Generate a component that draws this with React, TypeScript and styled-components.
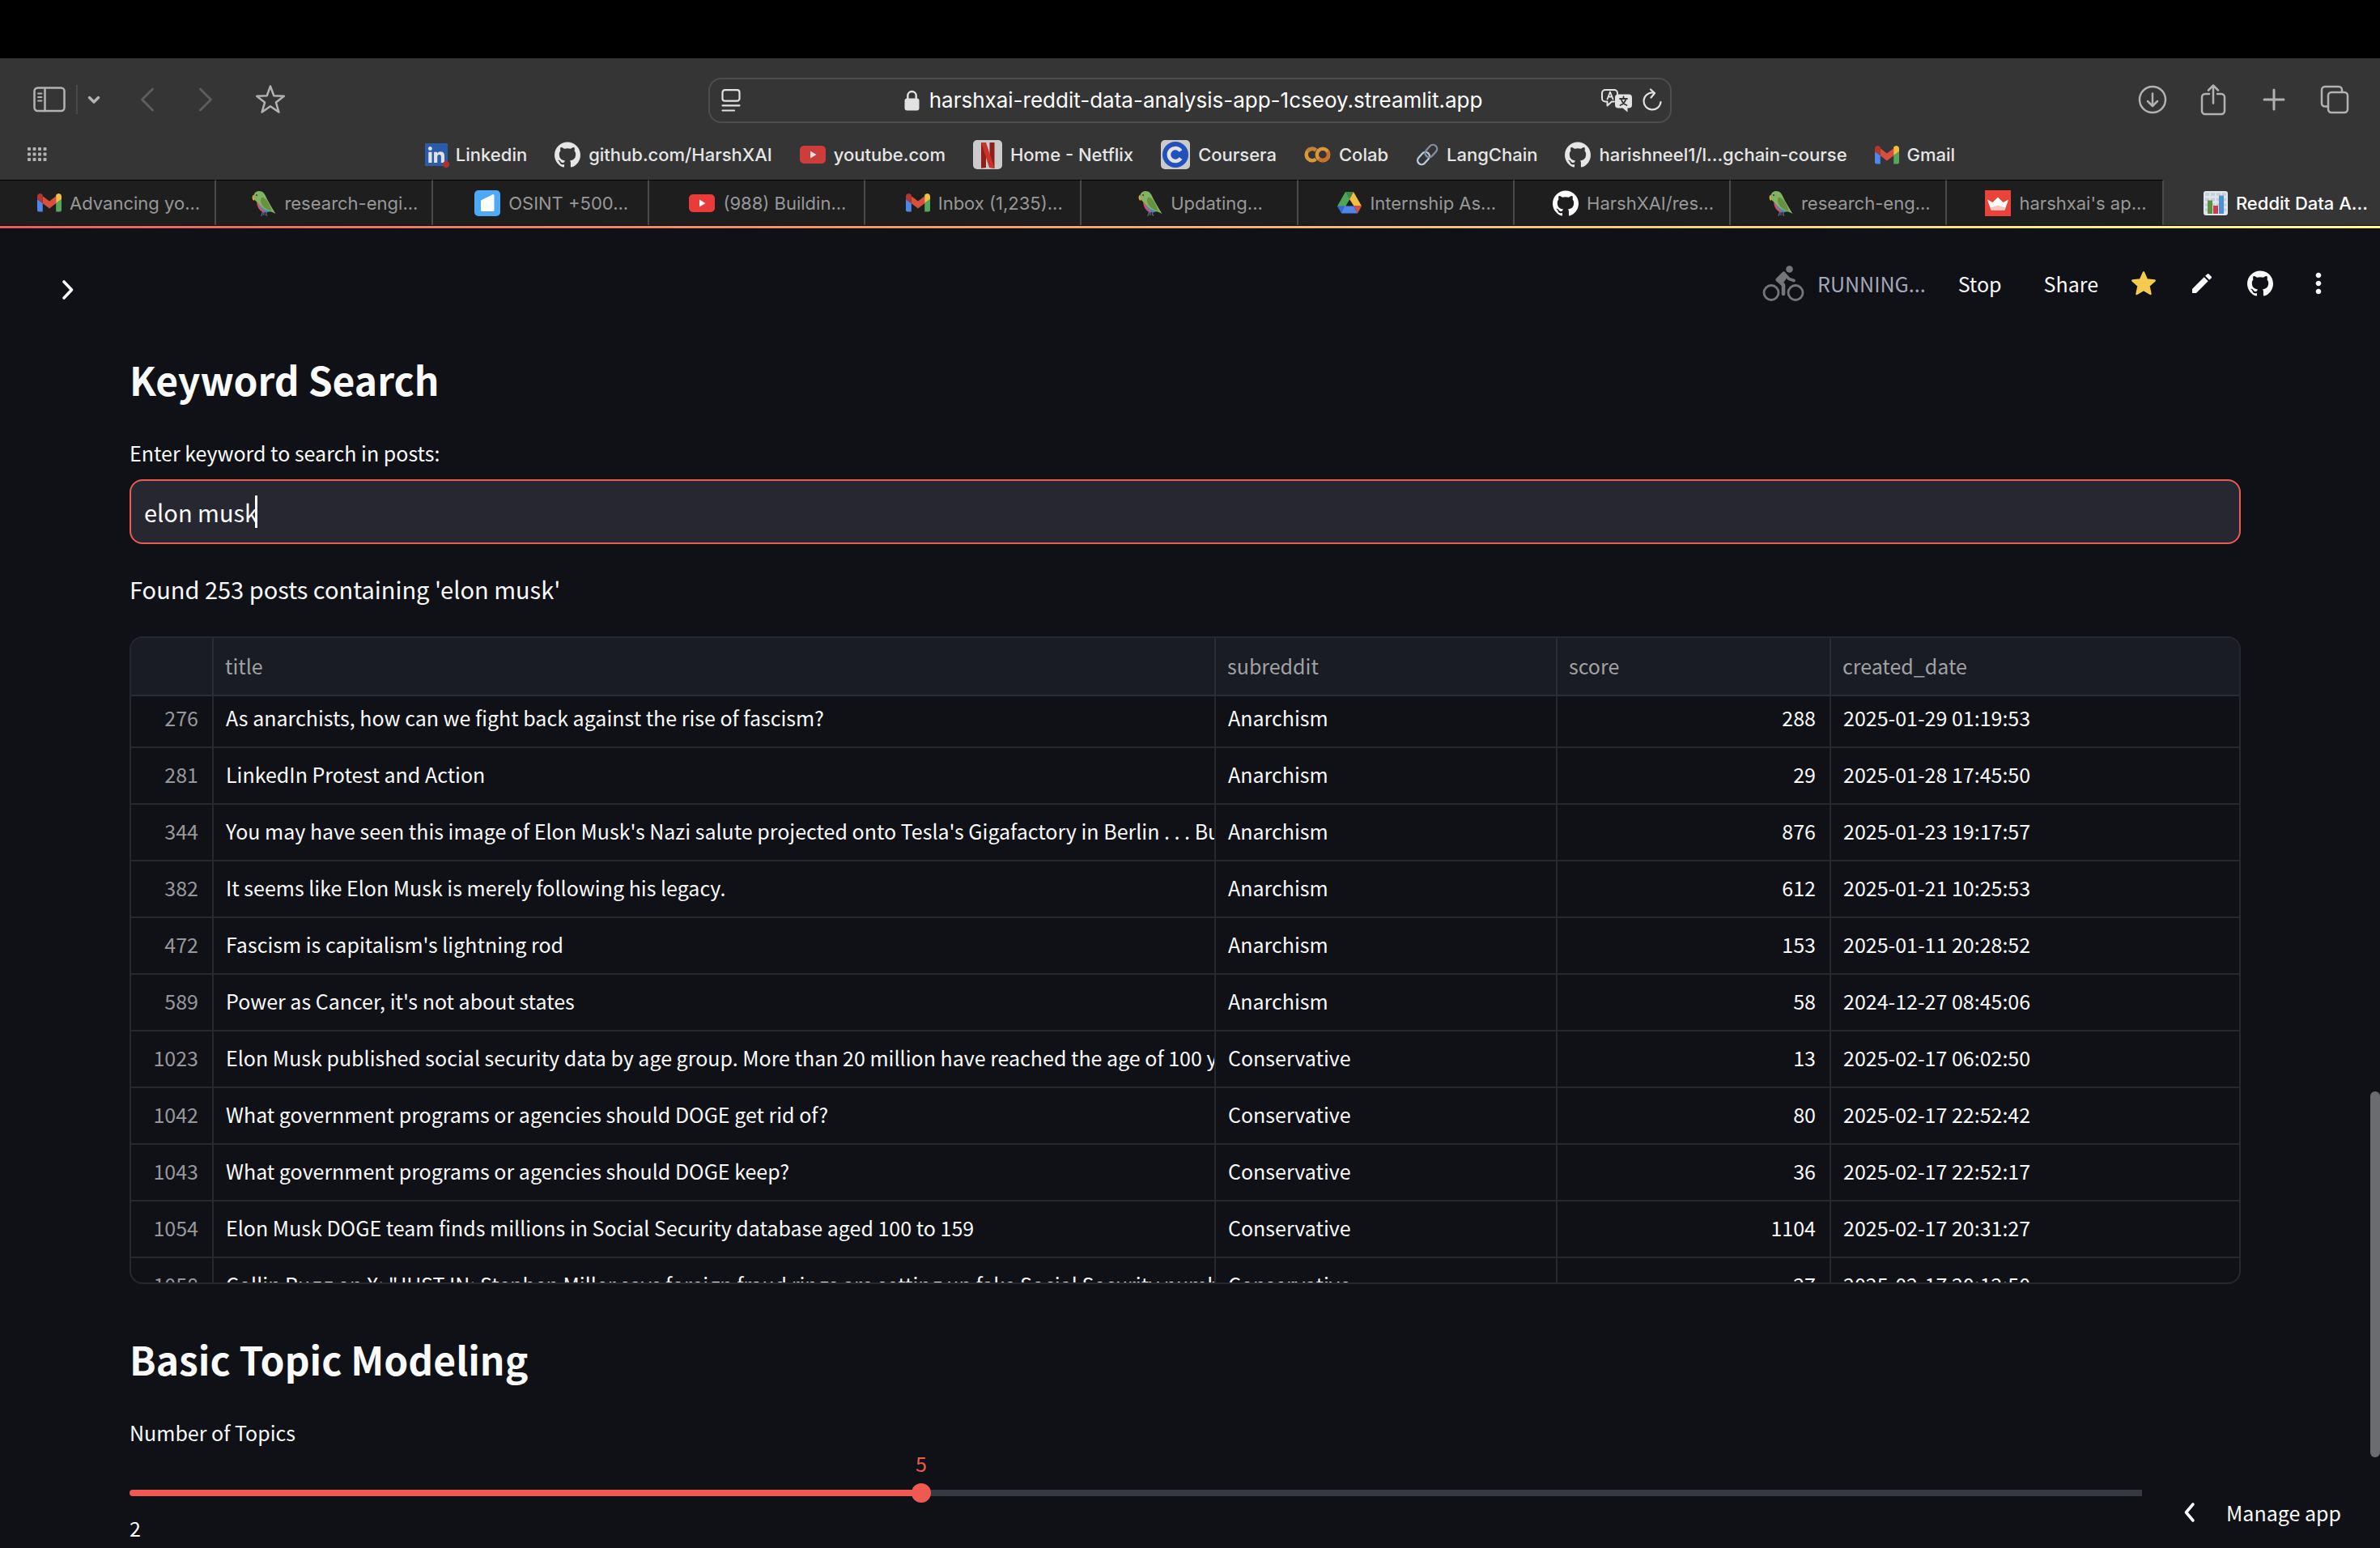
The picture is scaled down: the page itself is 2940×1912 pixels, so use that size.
import React, { useLayoutEffect, useRef, useState } from "react";
import styled, { createGlobalStyle } from "styled-components";
import { FaLinkedin } from "react-icons/fa";
import { SiGithub } from "react-icons/si";
import { MdEdit, MdMoreVert } from "react-icons/md";

const uiFont = `Inter, "Liberation Sans", sans-serif`;
const appFont = `"Noto Sans CJK SC", "Noto Sans", sans-serif`;

const GlobalStyle = createGlobalStyle`
  * { box-sizing: border-box; }
  html, body { margin: 0; background: #000; }
  button, input { font: inherit; color: inherit; margin: 0; }
  svg { display: block; flex: none; }
`;

/* ---------- browser window ---------- */

const Window = styled.div`
  position: relative;
  display: flex;
  flex-direction: column;
  height: 100vh;
  overflow: hidden;
  padding-top: 72px;
  background: #000;
  font-family: ${uiFont};
`;

const Chrome = styled.header`
  background: #353535;
  color: #b2b2b2;
`;

const Toolbar = styled.div`
  display: grid;
  grid-template-columns: 1fr minmax(0, 1190px) 1fr;
  align-items: center;
  height: 104px;
`;

const ToolGroup = styled.div<{ $end?: boolean }>`
  display: flex;
  align-items: center;
  justify-content: ${(p) => (p.$end ? "flex-end" : "flex-start")};
  gap: ${(p) => (p.$end ? "35px" : "0")};
  padding: ${(p) => (p.$end ? "0 36px 2px 0" : "0 0 2px 40px")};
`;

const ToolButton = styled.button<{ $width?: number; $dim?: boolean }>`
  display: flex;
  align-items: center;
  justify-content: center;
  width: ${(p) => p.$width ?? 40}px;
  height: 40px;
  padding: 0;
  border: 0;
  background: none;
  color: ${(p) => (p.$dim ? "#5e5e5e" : "inherit")};
`;

const ToolDivider = styled.span`
  width: 2px;
  height: 36px;
  margin: 0 6px 0 12px;
  background: #484848;
`;

const NavPair = styled.div`
  display: flex;
  gap: 32px;
  margin: 0 40px 0 32px;
`;

const AddressBar = styled.div`
  display: grid;
  grid-template-columns: 1fr auto 1fr;
  align-items: center;
  height: 56px;
  padding: 0 2px 0 10px;
  border: 2px solid #4e4e4e;
  border-radius: 16px;
  color: #e2e2e2;
`;

const AddressText = styled.div`
  display: flex;
  align-items: center;
  gap: 12px;
  color: #fff;
  font-size: 26px;
  line-height: 32px;
  white-space: nowrap;
`;

const AddressActions = styled.div`
  display: flex;
  justify-content: flex-end;
  gap: 4px;
`;

const Bookmarks = styled.nav`
  position: relative;
  display: flex;
  align-items: center;
  justify-content: center;
  gap: 34px;
  height: 46px;
  padding-bottom: 16px;
  color: #e6e6e6;
  font-size: 22px;
  font-weight: 500;
  line-height: 30px;
`;

const BookmarkGrid = styled.button`
  position: absolute;
  left: 34px;
  top: 6px;
  padding: 0;
  border: 0;
  background: none;
`;

const Bookmark = styled.a`
  display: flex;
  align-items: center;
  gap: 10px;
  color: inherit;
  text-decoration: none;
  white-space: nowrap;
`;

const TabBar = styled.div`
  display: grid;
  grid-template-columns: repeat(11, minmax(0, 1fr));
  height: 57px;
  border-bottom: 1px solid #000;
  background: #353535;
`;

const Tab = styled.button<{ $active?: boolean }>`
  display: flex;
  align-items: center;
  justify-content: center;
  gap: 10px;
  padding: 0 0 0 ${(p) => (p.$active ? "34px" : "28px")};
  border: 0;
  border-top: 1px solid ${(p) => (p.$active ? "#353535" : "#000")};
  border-right: ${(p) => (p.$active ? "0" : "2px solid #4a4a4a")};
  background: ${(p) => (p.$active ? "#353535" : "#1e1e1e")};
  color: ${(p) => (p.$active ? "#fff" : "#989898")};
  font-size: 22px;
  font-weight: ${(p) => (p.$active ? 500 : 400)};
  line-height: 30px;
  white-space: nowrap;
`;

/* ---------- streamlit app ---------- */

const Page = styled.main`
  position: relative;
  flex: 1;
  min-height: 0;
  overflow: hidden;
  background: #0f1116;
  color: #fafafa;
  font-family: ${appFont};
`;

const Decoration = styled.div`
  height: 3px;
  background: linear-gradient(90deg, #ee5a52, #fffd80);
`;

const AppHeader = styled.header`
  display: flex;
  align-items: center;
  justify-content: space-between;
  height: 136px;
  padding: 0 56px 0 64px;
  font-size: 25px;
  line-height: 38px;
`;

const HeaderActions = styled.div`
  display: flex;
  align-items: center;
`;

const Running = styled.div`
  display: flex;
  align-items: center;
  gap: 16px;
  color: #a3a8b8;
`;

const TextButton = styled.button`
  height: 56px;
  padding: 0;
  border: 0;
  margin-left: 40px;
  background: none;

  & + & {
    margin-left: 52px;
    margin-right: 36px;
  }
`;

const IconButton = styled.button`
  display: flex;
  align-items: center;
  justify-content: center;
  width: 40px;
  height: 40px;
  padding: 0;
  border: 0;
  background: none;
`;

const SidebarToggle = styled(IconButton)`
  margin-top: 16px;
`;

const IconRow = styled.div`
  display: flex;
  gap: 32px;
`;

const Content = styled.div`
  padding: 20px 172px 0 160px;
`;

const Heading = styled.h3`
  margin: 0;
  font-size: 48px;
  font-weight: 600;
  line-height: 60px;
`;

const Label = styled.label`
  display: block;
  margin-top: 42px;
  font-size: 25px;
  line-height: 38px;
`;

const Field = styled.div`
  position: relative;
  margin-top: 14px;
`;

const TextInput = styled.input`
  display: block;
  width: 100%;
  height: 80px;
  padding: 0 16px;
  border: 2px solid #ee5a52;
  border-radius: 16px;
  outline: 0;
  background: #262730;
  font-size: 29px;
  line-height: 48px;
`;

const Caret = styled.span`
  position: absolute;
  top: 20px;
  left: 155px;
  width: 3px;
  height: 40px;
  background: #fff;
`;

const Paragraph = styled.p`
  margin: 31px 0 35px;
  font-size: 29px;
  line-height: 48px;
`;

const GridFrame = styled.div`
  height: 800px;
  margin-bottom: 62px;
  border: 2px solid #26282d;
  border-radius: 16px;
  overflow: auto;
  scrollbar-width: none;
`;

const DataTable = styled.table`
  width: 100%;
  table-layout: fixed;
  border-collapse: separate;
  border-spacing: 0;
  font-size: 25px;
  line-height: 38px;
  white-space: nowrap;
`;

const Col = styled.col<{ $width?: number }>`
  width: ${(p) => (p.$width ? `${p.$width}px` : "auto")};
`;

const HeadCell = styled.th`
  position: sticky;
  top: 0;
  height: 72px;
  padding: 0 18px 2px 14px;
  border-bottom: 2px solid #2b2d33;
  border-right: 2px solid #2b2d33;
  background: #1a1c23;
  color: #a0a1a4;
  font-weight: 400;
  text-align: left;

  &:last-child {
    border-right: 0;
  }
`;

const Cell = styled.td<{ $numeric?: boolean; $muted?: boolean }>`
  height: 70px;
  padding: 0 ${(p) => (p.$numeric ? "17px" : "0")} 4px 15px;
  border-bottom: 2px solid #26282d;
  border-right: 2px solid #26282d;
  overflow: hidden;
  color: ${(p) => (p.$muted ? "#97989b" : "#fafafa")};
  text-align: ${(p) => (p.$numeric ? "right" : "left")};

  &:last-child {
    border-right: 0;
  }
`;

const Slider = styled.div`
  position: relative;
  padding-top: 52px;
`;

const SliderValue = styled.output`
  position: absolute;
  top: 0;
  color: #ee5a52;
  font-size: 25px;
  line-height: 38px;
  transform: translateX(-50%);
`;

const SliderTrack = styled.div`
  display: flex;
  align-items: center;
  height: 8px;
  border-radius: 4px;
`;

const Range = styled.input`
  appearance: none;
  flex: 1;
  height: 24px;
  margin: 0 -12px;
  background: transparent;

  &::-webkit-slider-thumb {
    appearance: none;
    width: 24px;
    height: 24px;
    border-radius: 50%;
    background: #ee5a52;
  }
`;

const SliderEnds = styled.div`
  display: flex;
  justify-content: space-between;
  margin-top: 20px;
  font-size: 25px;
  line-height: 38px;
`;

const ManageApp = styled.button`
  position: absolute;
  right: 0;
  bottom: 0;
  display: flex;
  align-items: center;
  gap: 36px;
  height: 88px;
  padding: 0 48px 0 50px;
  border: 0;
  background: #0f1116;
  font-size: 25px;
  line-height: 38px;
`;

const ScrollThumb = styled.div`
  position: absolute;
  right: 0;
  bottom: 112px;
  width: 12px;
  height: 452px;
  border-radius: 6px;
  background: #6b6c6f;
`;

/* ---------- icons ---------- */

const Line = ({ w, h, d, s = 2.5, box }: { w: number; h: number; d: string; s?: number; box?: string }) => (
  <svg width={w} height={h} viewBox={box ?? `0 0 ${w} ${h}`} fill="none" stroke="currentColor" strokeWidth={s} strokeLinecap="round" strokeLinejoin="round">
    <path d={d} />
  </svg>
);

const SidebarIcon = () => (
  <svg width="40" height="32" viewBox="0 0 40 32" fill="none" stroke="currentColor" strokeWidth="2.5" strokeLinecap="round">
    <rect x="1.5" y="1.5" width="37" height="28.5" rx="4" />
    <path d="M14.5 2v28" />
    <path d="M6 8.500h4.500M6 13h4.500M6 17.500h4.500" strokeWidth="1.800" />
  </svg>
);

const ReaderIcon = () => (
  <svg width="24" height="28" viewBox="0 0 24 28" fill="none" stroke="currentColor" strokeWidth="2.2" strokeLinecap="round">
    <rect x="1.5" y="1.2" width="21" height="13.5" rx="3" />
    <path d="M1.500 20.300h21M1.500 26.500h14.500" />
  </svg>
);

const LockIcon = () => (
  <svg width="19" height="26" viewBox="0 0 19 26">
    <path d="M4.300 12V7.200a5.200 5.200 0 0 1 10.400 0V12" fill="none" stroke="#e2e2e2" strokeWidth="2.400" />
    <rect x="0.500" y="10.500" width="18" height="15" rx="3" fill="#e2e2e2" />
  </svg>
);

const TranslateIcon = () => (
  <svg width="40" height="30" viewBox="0 0 40 30" fill="none" strokeLinecap="round" strokeLinejoin="round">
    <path d="M17 16.500h-3l-5.500 5v-5H6a4 4 0 0 1-4-4V6a4 4 0 0 1 4-4h11a4 4 0 0 1 4 4v1" stroke="#e2e2e2" strokeWidth="2" />
    <path d="M8.500 13.500l3.500-9 3.500 9M9.700 10.500h4.600" stroke="#e2e2e2" strokeWidth="1.800" />
    <path d="M22 7.500h13a4 4 0 0 1 4 4v9a4 4 0 0 1-4 4h-1.500v5l-6-5H22a4 4 0 0 1-4-4v-9a4 4 0 0 1 4-4z" fill="#e2e2e2" />
    <path d="M28.500 10.500v2.500M24 13h9M31.500 13c-1 4-4 7-7 8M25.500 13c1 4 4 7 7 8" stroke="#353535" strokeWidth="1.800" />
  </svg>
);

const StarOutline = () => (
  <Line w={38} h={38} d="M19 2.500l4.300 11.800 12.500.400-9.900 7.700 3.500 12.100L19 27.300 8.600 34.500l3.500-12.100-9.900-7.700 12.500-.400z" />
);

const DotsGrid = () => (
  <svg width="24" height="18" viewBox="0 0 24 18" fill="#b2b2b2">
    {[0, 6.5, 13, 19.5].map((x) => [0, 6.5, 13].map((y) => <rect key={`${x}-${y}`} x={x} y={y} width="4" height="4" rx="1" />))}
  </svg>
);

const GmailIcon = () => (
  <svg width="30" height="23" viewBox="0 0 30 23">
    <path d="M0 7l6.800 5v10.500H2A2 2 0 0 1 0 20.500z" fill="#4f86ec" />
    <path d="M30 7l-6.800 5v10.500H28a2 2 0 0 0 2-2z" fill="#58a55c" />
    <path d="M6.800 3.300L15 9.600l8.200-6.300v8.900L15 18.400l-8.200-6.200z" fill="#d94f3d" />
    <path d="M0 7V3.600C0 .700 3.300-.900 5.600.800l1.200 1V12z" fill="#b5362b" />
    <path d="M30 7V3.600C30 .700 26.700-.900 24.400.800l-1.200 1V12z" fill="#f2be42" />
  </svg>
);

const ParrotIcon = () => (
  <svg width="30" height="32" viewBox="0 0 30 32">
    <path d="M13.500 26.500l-1 4M13 30l-1.500 1.500M18 26.500l-.5 4M17.500 30l1.500 1.500M15 27v4" stroke="#5d6b78" strokeWidth="1.300" fill="none" />
    <path d="M1.500 6C.200 7.500.200 11.500 2.500 13L5 8z" fill="#f2a33c" />
    <path d="M6 12c0 8 3 13.500 9 15.500l6-2-6-13z" fill="#cf5468" />
    <path d="M9 17c1.500 5 4.500 8 8.500 10.500L24 26l-9-9z" fill="#4b83c9" />
    <path d="M2.200 7C3 3 6 1 9 1c5 0 7 3.500 9 8 3 6 6.500 12 11.500 20-3.500-2-6.500-2.800-9-3.500C12 23 9 16 4 12.500 2.500 11 1.800 9 2.200 7z" fill="#83b264" />
    <path d="M13 8.500c5 2 9.500 9 11.500 17-6-.500-13-6-13.500-13 0-2 .8-3.500 2-4z" fill="#66923f" />
    <circle cx="6" cy="6" r="1.100" fill="#35472a" />
  </svg>
);

const TelegraphIcon = () => (
  <svg width="32" height="32" viewBox="0 0 32 32">
    <rect width="32" height="32" rx="5" fill="#4fa9f7" />
    <path d="M8 12.500L22 5.500c1.500-.700 2.500 0 2.500 1.500v17.500a1.500 1.500 0 0 1-1.500 1.500H9.500A1.500 1.500 0 0 1 8 24.500z" fill="#fff" />
  </svg>
);

const YoutubeIcon = ({ muted }: { muted?: boolean }) => (
  <svg width="32" height="22" viewBox="0 0 32 22">
    <rect width="32" height="22" rx="5" fill={muted ? "#cc3d3b" : "#ea3b3b"} />
    <path d="M13 6.500v9l7.500-4.500z" fill={muted ? "#e2e2e2" : "#fff"} />
  </svg>
);

const NetflixIcon = () => (
  <svg width="36" height="36" viewBox="0 0 36 36">
    <rect width="36" height="36" rx="5" fill="#cbcbcb" />
    <path d="M10 3h6v31l-6 .700zM20.500 3h6v31.700l-6-.700z" fill="#8f1f1b" />
    <path d="M10 3h6l10.500 31.700-6.500-.700z" fill="#c8342b" />
  </svg>
);

const CourseraIcon = () => (
  <svg width="36" height="36" viewBox="0 0 36 36">
    <rect width="36" height="36" rx="5" fill="#cbcbcb" />
    <circle cx="18" cy="18" r="16" fill="#2250bd" />
    <path d="M24.500 13.500a8 8 0 1 0 0 9" fill="none" stroke="#e2e2e2" strokeWidth="4.600" />
  </svg>
);

const ColabIcon = () => (
  <svg width="33" height="20" viewBox="0 0 33 20" fill="none" strokeWidth="4.500">
    <circle cx="23" cy="10" r="7.200" stroke="#d9973a" />
    <path d="M18 15a7.200 7.200 0 0 0 11-9" stroke="#c96f2b" />
    <path d="M14.500 4.500a7.200 7.200 0 1 0 0 11" stroke="#d99a3b" />
    <path d="M4 6a7.200 7.200 0 0 1 10.500-1.500" stroke="#c9802f" />
  </svg>
);

const ChainIcon = () => (
  <svg width="28" height="28" viewBox="0 0 28 28" fill="none" strokeWidth="2.400">
    <rect x="-5" y="-8.500" width="10" height="17" rx="5" transform="translate(9.500 18.500) rotate(42)" stroke="#b9cbdc" />
    <rect x="-5" y="-8.500" width="10" height="17" rx="5" transform="translate(18.800 9.500) rotate(42)" stroke="#7f8fa3" />
  </svg>
);

const DriveIcon = () => (
  <svg width="30" height="27" viewBox="0 0 30 27">
    <path d="M10 0h5v9.500L5.500 26 0 17.500z" fill="#4ea556" />
    <path d="M10 0h10l-5 9z" fill="#3a8a47" />
    <path d="M20 0l10 17.500h-9.500L15 9z" fill="#f2be42" />
    <path d="M0 17.500h9.500l-4.500 9z" fill="#3367d6" />
    <path d="M9.500 17.500h11l4.500 9H5z" fill="#4f86ec" />
    <path d="M20.500 17.500H30l-5 9z" fill="#d94f3d" />
  </svg>
);

const StreamlitIcon = () => (
  <svg width="32" height="32" viewBox="0 0 32 32">
    <rect width="32" height="32" fill="#e9433b" />
    <path d="M3 11.500l6.500 3.500L16 8.500l6.500 6.500 6.500-3.500-4.500 13h-17z" fill="#fff" />
    <path d="M7 21.500l9-3 9 3-1 3H8z" fill="#f6c5c2" />
  </svg>
);

const ChartIcon = () => (
  <svg width="30" height="30" viewBox="0 0 30 30">
    <rect width="30" height="30" rx="3" fill="#dfe6ec" />
    <path d="M2 4h26M2 10.500h26M2 17h26M2 23h26" stroke="#c6d0d9" strokeWidth="3.600" strokeDasharray="5 2" />
    <rect x="5" y="11.500" width="6" height="16.500" fill="#5f9140" />
    <rect x="12" y="18" width="6" height="10" fill="#ca3f4c" />
    <rect x="19" y="5.500" width="6" height="22.500" fill="#4d90d4" />
  </svg>
);

const LinkedinMark = styled.span`
  position: relative;
  display: flex;
  width: 28px;
  height: 28px;
  overflow: visible;
  background: #e2e2e2;
  color: #2a5caa;
  border-radius: 3px;

  svg {
    width: 32px;
    height: 32px;
    margin: -2px;
  }

  &::after {
    content: "";
    position: absolute;
    right: -2px;
    bottom: -2px;
    width: 8px;
    height: 8px;
    border-radius: 50%;
    background: #b0302a;
  }
`;

const BikeIcon = () => (
  <svg width="52" height="46" viewBox="0 0 52 46" fill="none" stroke="#74767a" strokeLinecap="round" strokeLinejoin="round">
    <circle cx="11" cy="34.500" r="9" strokeWidth="2.800" />
    <circle cx="41" cy="34.500" r="9" strokeWidth="2.800" />
    <circle cx="33.500" cy="5.500" r="4.300" fill="#74767a" stroke="none" />
    <path d="M26 36V25l-6.500-6" strokeWidth="4.600" />
    <path d="M19 18.500l7.500-7.500 2 3.500-5 7z" fill="#74767a" strokeWidth="5" />
    <path d="M28 12l5 5.500 6 2" strokeWidth="3.800" />
  </svg>
);

const StarSolid = () => (
  <svg width="32" height="32" viewBox="0 0 32 32" fill="#f3cc4f" stroke="#f3cc4f" strokeWidth="2.500" strokeLinejoin="round">
    <path d="M16 2.500l4 9 9.700 1-7.300 6.500 2.100 10L16 24l-8.500 5 2.100-10-7.300-6.500 9.700-1z" />
  </svg>
);

/* ---------- data ---------- */

const bookmarks: [React.ReactNode, string][] = [
  [<LinkedinMark><FaLinkedin /></LinkedinMark>, "Linkedin"],
  [<SiGithub size={32} />, "github.com/HarshXAI"],
  [<YoutubeIcon muted />, "youtube.com"],
  [<NetflixIcon />, "Home - Netflix"],
  [<CourseraIcon />, "Coursera"],
  [<ColabIcon />, "Colab"],
  [<ChainIcon />, "LangChain"],
  [<SiGithub size={32} />, "harishneel1/l...gchain-course"],
  [<GmailIcon />, "Gmail"],
];

const tabs: [React.ReactNode, string][] = [
  [<GmailIcon />, "Advancing yo..."],
  [<ParrotIcon />, "research-engi..."],
  [<TelegraphIcon />, "OSINT +500..."],
  [<YoutubeIcon />, "(988) Buildin..."],
  [<GmailIcon />, "Inbox (1,235)..."],
  [<ParrotIcon />, "Updating..."],
  [<DriveIcon />, "Internship As..."],
  [<SiGithub size={32} color="#fff" />, "HarshXAI/res..."],
  [<ParrotIcon />, "research-eng..."],
  [<StreamlitIcon />, "harshxai's ap..."],
  [<ChartIcon />, "Reddit Data A..."],
];

const posts: [number, string, string, number, string][] = [
  [276, "As anarchists, how can we fight back against the rise of fascism?", "Anarchism", 288, "2025-01-29 01:19:53"],
  [281, "LinkedIn Protest and Action", "Anarchism", 29, "2025-01-28 17:45:50"],
  [344, "You may have seen this image of Elon Musk's Nazi salute projected onto Tesla's Gigafactory in Berlin . . . But", "Anarchism", 876, "2025-01-23 19:17:57"],
  [382, "It seems like Elon Musk is merely following his legacy.", "Anarchism", 612, "2025-01-21 10:25:53"],
  [472, "Fascism is capitalism's lightning rod", "Anarchism", 153, "2025-01-11 20:28:52"],
  [589, "Power as Cancer, it's not about states", "Anarchism", 58, "2024-12-27 08:45:06"],
  [1023, "Elon Musk published social security data by age group. More than 20 million have reached the age of 100 years", "Conservative", 13, "2025-02-17 06:02:50"],
  [1042, "What government programs or agencies should DOGE get rid of?", "Conservative", 80, "2025-02-17 22:52:42"],
  [1043, "What government programs or agencies should DOGE keep?", "Conservative", 36, "2025-02-17 22:52:17"],
  [1054, "Elon Musk DOGE team finds millions in Social Security database aged 100 to 159", "Conservative", 1104, "2025-02-17 20:31:27"],
  [1058, "Collin Rugg on X: \"JUST IN: Stephen Miller says foreign fraud rings are setting up fake Social Security numbers", "Conservative", 27, "2025-02-17 20:12:50"],
];

/* ---------- parts ---------- */

function BrowserChrome() {
  return (
    <Chrome>
      <Toolbar>
        <ToolGroup>
          <ToolButton $width={42} aria-label="Show sidebar"><SidebarIcon /></ToolButton>
          <ToolDivider />
          <ToolButton $width={28} aria-label="Tab groups">
            <Line w={16} h={12} s={3.5} d="M2.500 3.500L8 9l5.500-5.500" />
          </ToolButton>
          <NavPair>
            <ToolButton $dim aria-label="Back"><Line w={18} h={30} s={2.8} d="M15.500 2L2.500 15l13 13" /></ToolButton>
            <ToolButton $dim aria-label="Forward"><Line w={18} h={30} s={2.8} d="M2.500 2l13 13-13 13" /></ToolButton>
          </NavPair>
          <ToolButton aria-label="Favourites"><StarOutline /></ToolButton>
        </ToolGroup>
        <AddressBar>
          <ToolButton $width={32} aria-label="Page menu"><ReaderIcon /></ToolButton>
          <AddressText>
            <LockIcon />
            harshxai-reddit-data-analysis-app-1cseoy.streamlit.app
          </AddressText>
          <AddressActions>
            <ToolButton aria-label="Translate"><TranslateIcon /></ToolButton>
            <ToolButton aria-label="Reload">
              <Line w={26} h={30} s={2.2} d="M14 5.500A10.500 10.500 0 1 0 23.500 17M11 1.500l5 4.500-4.500 5.500" />
            </ToolButton>
          </AddressActions>
        </AddressBar>
        <ToolGroup $end>
          <ToolButton aria-label="Downloads">
            <Line w={36} h={36} d="M18 2a16 16 0 1 1 0 32 16 16 0 0 1 0-32zM18 10.500v15M12 20l6 6 6-6" />
          </ToolButton>
          <ToolButton aria-label="Share">
            <Line w={32} h={40} d="M11 13H6a4 4 0 0 0-4 4v17a4 4 0 0 0 4 4h20a4 4 0 0 0 4-4V17a4 4 0 0 0-4-4h-5M16 24.500V2.500M10 8.500l6-6 6 6" />
          </ToolButton>
          <ToolButton aria-label="New tab"><Line w={28} h={28} s={3} d="M14 2v24M2 14h24" /></ToolButton>
          <ToolButton aria-label="Tab overview">
            <Line w={36} h={36} d="M9.500 26.500H6a4 4 0 0 1-4-4V6a4 4 0 0 1 4-4h17a4 4 0 0 1 4 4v2.500M14 9h16a4 4 0 0 1 4 4v17a4 4 0 0 1-4 4H14a4 4 0 0 1-4-4V13a4 4 0 0 1 4-4z" />
          </ToolButton>
        </ToolGroup>
      </Toolbar>
      <Bookmarks>
        <BookmarkGrid aria-label="All bookmarks"><DotsGrid /></BookmarkGrid>
        {bookmarks.map(([icon, name]) => (
          <Bookmark key={name} href="#">{icon}{name}</Bookmark>
        ))}
      </Bookmarks>
      <TabBar>
        {tabs.map(([icon, name], i) => (
          <Tab key={name} $active={i === tabs.length - 1}>{icon}{name}</Tab>
        ))}
      </TabBar>
    </Chrome>
  );
}

function PostsTable() {
  const frame = useRef<HTMLDivElement>(null);
  useLayoutEffect(() => {
    if (frame.current) frame.current.scrollTop = 6;
  }, []);
  return (
    <GridFrame ref={frame}>
      <DataTable>
        <colgroup>
          <Col $width={102} />
          <Col />
          <Col $width={422} />
          <Col $width={338} />
          <Col $width={504} />
        </colgroup>
        <thead>
          <tr>
            <HeadCell />
            <HeadCell>title</HeadCell>
            <HeadCell>subreddit</HeadCell>
            <HeadCell>score</HeadCell>
            <HeadCell>created_date</HeadCell>
          </tr>
        </thead>
        <tbody>
          {posts.map(([id, title, sub, score, date]) => (
            <tr key={id}>
              <Cell $numeric $muted>{id}</Cell>
              <Cell>{title}</Cell>
              <Cell>{sub}</Cell>
              <Cell $numeric>{score}</Cell>
              <Cell>{date}</Cell>
            </tr>
          ))}
        </tbody>
      </DataTable>
    </GridFrame>
  );
}

function TopicSlider() {
  const min = 2;
  const max = 10;
  const [value, setValue] = useState(5);
  const pct = ((value - min) / (max - min)) * 100;
  return (
    <>
      <Label htmlFor="topics">Number of Topics</Label>
      <Slider>
        <SliderValue htmlFor="topics" style={{ left: `${pct}%` }}>{value}</SliderValue>
        <SliderTrack style={{ background: `linear-gradient(90deg, #ee5a52 ${pct}%, #363842 ${pct}%)` }}>
          <Range id="topics" type="range" min={min} max={max} value={value} onChange={(e) => setValue(Number(e.target.value))} />
        </SliderTrack>
        <SliderEnds><span>{min}</span></SliderEnds>
      </Slider>
    </>
  );
}

export default function App() {
  const [keyword, setKeyword] = useState("elon musk");
  return (
    <Window>
      <GlobalStyle />
      <BrowserChrome />
      <Page>
        <Decoration />
        <AppHeader>
          <SidebarToggle aria-label="Open sidebar"><Line w={16} h={26} s={3.6} d="M3 3l9.500 10L3 23" /></SidebarToggle>
          <HeaderActions>
            <Running><BikeIcon />RUNNING...</Running>
            <TextButton>Stop</TextButton>
            <TextButton>Share</TextButton>
            <IconRow>
              <IconButton aria-label="Favourite"><StarSolid /></IconButton>
              <IconButton aria-label="Edit"><MdEdit size={32} /></IconButton>
              <IconButton aria-label="View source"><SiGithub size={32} /></IconButton>
              <IconButton aria-label="Menu"><MdMoreVert size={40} /></IconButton>
            </IconRow>
          </HeaderActions>
        </AppHeader>
        <Content>
          <Heading>Keyword Search</Heading>
          <Label htmlFor="keyword">Enter keyword to search in posts:</Label>
          <Field>
            <TextInput id="keyword" value={keyword} onChange={(e) => setKeyword(e.target.value)} />
            <Caret />
          </Field>
          <Paragraph>Found 253 posts containing 'elon musk'</Paragraph>
          <PostsTable />
          <Heading>Basic Topic Modeling</Heading>
          <TopicSlider />
        </Content>
        <ManageApp>
          <Line w={18} h={26} s={3.6} d="M13 3L4.500 13 13 23" />
          Manage app
        </ManageApp>
        <ScrollThumb />
      </Page>
    </Window>
  );
}
